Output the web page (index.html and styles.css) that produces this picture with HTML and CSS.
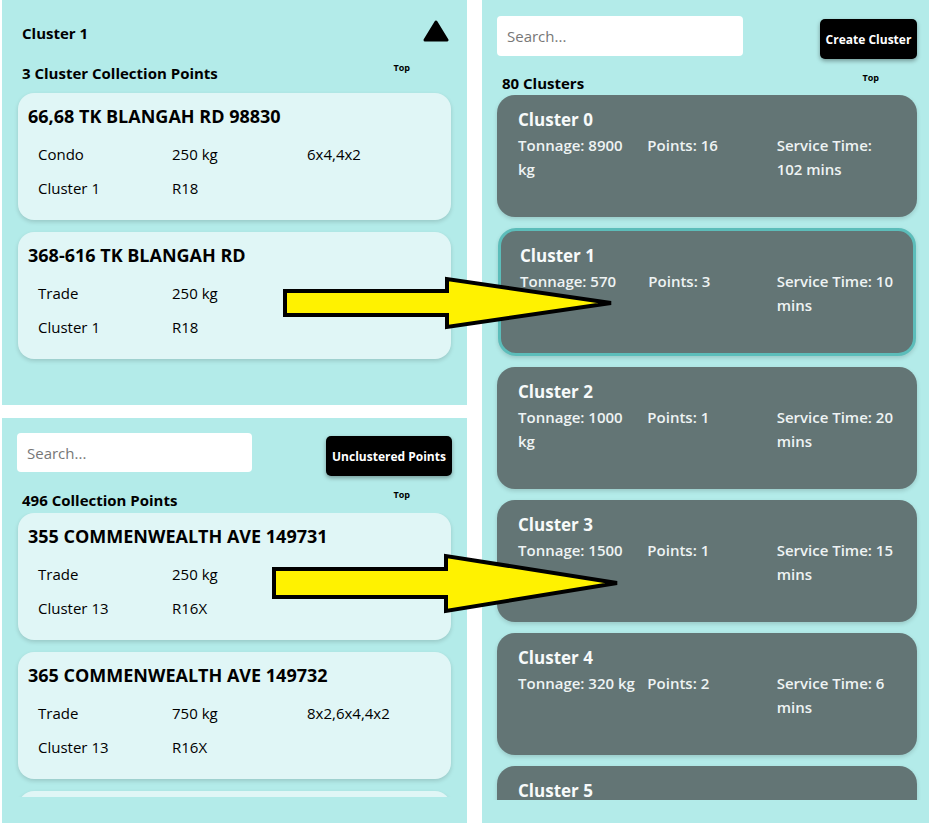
FILE: index.html
```html
<!DOCTYPE html>
<html lang="en">
<head>
<meta charset="utf-8">
<title>Clusters</title>
<link rel="stylesheet" href="styles.css">
</head>
<body>
<div class="page">
  <div class="left-col">
    <section class="panel panel-cluster">
      <div class="panel-head">
        <h2 class="heading">Cluster 1</h2>
        <svg class="collapse" width="26" height="24" viewBox="0 0 26 24" aria-hidden="true">
          <path d="M13 3 L24 21 L2 21 Z" fill="#000" stroke="#000" stroke-width="3" stroke-linejoin="round"/>
        </svg>
      </div>
      <div class="list-head lh-cluster">
        <span class="count">3 Cluster Collection Points</span>
        <span class="top-link">Top</span>
      </div>
      <div class="point-list">
        <div class="point-card">
          <div class="point-title">66,68 TK BLANGAH RD 98830</div>
          <div class="point-grid">
            <span>Condo</span><span>250 kg</span><span>6x4,4x2</span>
            <span>Cluster 1</span><span>R18</span><span></span>
          </div>
        </div>
        <div class="point-card">
          <div class="point-title">368-616 TK BLANGAH RD</div>
          <div class="point-grid">
            <span>Trade</span><span>250 kg</span><span></span>
            <span>Cluster 1</span><span>R18</span><span></span>
          </div>
        </div>
      </div>
    </section>

    <section class="panel panel-points">
      <div class="toolbar tb-left">
        <input class="search search-left" type="text" placeholder="Search...">
        <button class="btn btn-uncl">Unclustered Points</button>
      </div>
      <div class="list-head lh-points">
        <span class="count">496 Collection Points</span>
        <span class="top-link">Top</span>
      </div>
      <div class="point-list clip-points">
        <div class="point-card">
          <div class="point-title">355 COMMENWEALTH AVE 149731</div>
          <div class="point-grid">
            <span>Trade</span><span>250 kg</span><span></span>
            <span>Cluster 13</span><span>R16X</span><span></span>
          </div>
        </div>
        <div class="point-card">
          <div class="point-title">365 COMMENWEALTH AVE 149732</div>
          <div class="point-grid">
            <span>Trade</span><span>750 kg</span><span>8x2,6x4,4x2</span>
            <span>Cluster 13</span><span>R16X</span><span></span>
          </div>
        </div>
        <div class="point-card"></div>
      </div>
    </section>
  </div>

  <section class="panel panel-clusters">
    <div class="toolbar tb-right">
      <input class="search search-right" type="text" placeholder="Search...">
      <button class="btn btn-create">Create Cluster</button>
    </div>
    <div class="list-head lh-clusters">
      <span class="count">80 Clusters</span>
      <span class="top-link">Top</span>
    </div>
    <div class="cluster-list">
      <div class="cluster-card">
        <div class="cluster-title">Cluster 0</div>
        <div class="cluster-grid"><span>Tonnage: 8900 kg</span><span>Points: 16</span><span>Service Time: 102 mins</span></div>
      </div>
      <div class="cluster-card selected">
        <div class="cluster-title">Cluster 1</div>
        <div class="cluster-grid"><span>Tonnage: 570</span><span>Points: 3</span><span>Service Time: 10 mins</span></div>
      </div>
      <div class="cluster-card">
        <div class="cluster-title">Cluster 2</div>
        <div class="cluster-grid"><span>Tonnage: 1000 kg</span><span>Points: 1</span><span>Service Time: 20 mins</span></div>
      </div>
      <div class="cluster-card">
        <div class="cluster-title">Cluster 3</div>
        <div class="cluster-grid"><span>Tonnage: 1500</span><span>Points: 1</span><span>Service Time: 15 mins</span></div>
      </div>
      <div class="cluster-card">
        <div class="cluster-title">Cluster 4</div>
        <div class="cluster-grid"><span>Tonnage: 320 kg</span><span>Points: 2</span><span>Service Time: 6 mins</span></div>
      </div>
      <div class="cluster-card">
        <div class="cluster-title">Cluster 5</div>
      </div>
    </div>
  </section>

  <svg class="arrows" width="929" height="823" viewBox="0 0 929 823" aria-hidden="true">
    <polygon points="285,291 447,291 447,279 611,303 447,327 447,315 285,315" fill="#fff200" stroke="#000" stroke-width="4" stroke-linejoin="miter"/>
    <polygon points="274,569 446,569 446,556 617,583 446,611 446,597 274,597" fill="#fff200" stroke="#000" stroke-width="4" stroke-linejoin="miter"/>
  </svg>
</div>
</body>
</html>
```

FILE: styles.css
```css
* { box-sizing: border-box; }

html, body {
  margin: 0;
  padding: 0;
  background: #ffffff;
}

body {
  font-family: "Open Sans", "Noto Sans", sans-serif;
  color: #000;
  width: 929px;
  height: 823px;
  overflow: hidden;
}

.page {
  position: relative;
  display: grid;
  grid-template-columns: 465px 447px;
  column-gap: 15px;
  padding-left: 2px;
  height: 823px;
}

.left-col {
  display: grid;
  grid-template-rows: 405px 405px;
  row-gap: 13px;
}

.panel {
  background: #b3ebe9;
  overflow: hidden;
}

/* headers */
.panel-head {
  display: flex;
  justify-content: space-between;
  align-items: flex-start;
  padding: 19px 18px 0 20px;
}

.heading {
  margin: 2px 0 0;
  font-size: 15px;
  line-height: 24px;
  font-weight: 700;
}

.collapse { display: block; }

.list-head {
  display: flex;
  justify-content: space-between;
  align-items: flex-start;
  padding-left: 20px;
}

.count {
  font-size: 15px;
  line-height: 20px;
  font-weight: 700;
}

.top-link {
  font-size: 9px;
  line-height: 10px;
  font-weight: 700;
}

.lh-cluster { margin-top: 18px; padding-right: 57px; }
.lh-points { margin-top: 14px; padding-right: 57px; }
.lh-clusters { margin-top: 14px; padding-right: 50px; }

/* toolbars */
.toolbar {
  display: flex;
  justify-content: space-between;
  align-items: flex-start;
}

.tb-left { padding: 15px 15px 0 15px; }
.tb-right { padding: 16px 12px 0 15px; }

.search {
  border: none;
  outline: none;
  background: #fff;
  border-radius: 4px;
  padding: 0 10px;
  font-family: inherit;
  font-size: 15px;
  color: #333;
}

.search::placeholder { color: #777; }

.search-left { width: 235px; height: 39px; }
.search-right { width: 246px; height: 40px; }

.btn {
  margin-top: 3px;
  height: 40px;
  border: none;
  border-radius: 5px;
  background: #000;
  color: #fff;
  font-family: inherit;
  font-size: 12px;
  font-weight: 700;
  padding: 0;
  box-shadow: 0 2px 4px rgba(0, 0, 0, 0.35);
}

.btn-uncl { width: 126px; }
.btn-create { width: 97px; }

/* collection point cards */
.point-list {
  display: flex;
  flex-direction: column;
  gap: 12px;
  padding: 0 16px;
  margin-top: 10px;
}

.clip-points {
  margin-top: 3px;
  height: 284px;
  overflow: hidden;
}

.point-card {
  flex: none;
  height: 127px;
  background: #e0f6f6;
  border-radius: 16px;
  padding: 11px 10px 0 10px;
  box-shadow: 0 2px 4px rgba(0, 0, 0, 0.15);
}

.point-title {
  font-size: 18px;
  line-height: 24px;
  font-weight: 700;
  white-space: nowrap;
}

.point-grid {
  display: grid;
  grid-template-columns: 134px 135px 134px;
  grid-auto-rows: 34px;
  align-items: center;
  margin-top: 9px;
  padding-left: 10px;
  font-size: 15px;
}

/* cluster cards */
.cluster-list {
  display: flex;
  flex-direction: column;
  gap: 11px;
  padding: 0 12px 0 15px;
  margin-top: 2px;
  height: 705px;
  overflow: hidden;
}

.cluster-card {
  flex: none;
  height: 122px;
  background: #637575;
  border-radius: 18px;
  padding: 13px 21px 0 21px;
  color: #eef3f3;
  box-shadow: 0 2px 4px rgba(0, 0, 0, 0.15);
}

.cluster-card.selected {
  height: 128px;
  margin: 0 1px;
  border: 3px solid #5cbdba;
  padding: 13px 18px 0 19px;
}

.cluster-title {
  font-size: 17px;
  line-height: 24px;
  font-weight: 700;
  color: #f7fafa;
}

.cluster-grid {
  display: grid;
  grid-template-columns: 1fr 1fr 1fr;
  column-gap: 10px;
  margin-top: 1px;
  font-size: 15px;
  line-height: 24px;
  font-weight: 600;
}

/* annotation arrows overlay */
.arrows {
  position: absolute;
  top: 0;
  left: 0;
  pointer-events: none;
}
```
